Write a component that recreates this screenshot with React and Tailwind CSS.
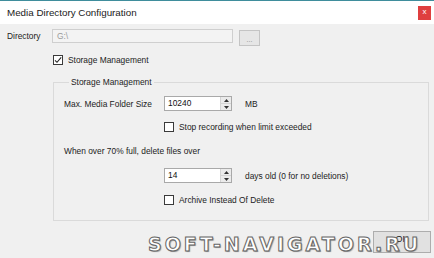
import React from 'react'

const ui = "[font-family:'Liberation_Sans',Arial,sans-serif]"

function Check({ checked }) {
  return (
    <span className="flex h-[10px] w-[10px] shrink-0 items-center justify-center border border-[#3a3a3a] bg-white">
      {checked && (
        <svg width="8" height="8" viewBox="0 0 8 8">
          <path d="M1 4.3 L3 6.3 L7.2 1.4" fill="none" stroke="#222" strokeWidth="1.1" />
        </svg>
      )}
    </span>
  )
}

function Spin({ value }) {
  return (
    <div className="flex h-[15px] w-[68px] border border-[#a9a9a9] bg-white">
      <span className="flex-1 pl-[3px] leading-[13px] text-[#111]">{value}</span>
      <div className="flex w-[11px] flex-col border-l border-[#d4d4d4]">
        <span className="flex flex-1 items-center justify-center border-b border-[#d4d4d4] bg-[#ebebeb]">
          <svg width="5" height="3" viewBox="0 0 5 3">
            <path d="M0 3 L2.5 0 L5 3 Z" fill="#333" />
          </svg>
        </span>
        <span className="flex flex-1 items-center justify-center bg-[#ebebeb]">
          <svg width="5" height="3" viewBox="0 0 5 3">
            <path d="M0 0 L2.5 3 L5 0 Z" fill="#333" />
          </svg>
        </span>
      </div>
    </div>
  )
}

export default function App() {
  return (
    <div className={`relative flex h-[258px] w-[434px] flex-col overflow-hidden border-t border-[#3f8d9c] bg-[#f0f0f0] text-[8.4px] leading-[10px] text-[#1c1c1c] ${ui}`}>
      {/* title bar */}
      <div className="flex h-[23px] items-center justify-between bg-white pl-[7px] pr-[3px]">
        <span className="text-[9.8px] text-[#1a1a1a]">Media Directory Configuration</span>
        <span className="flex h-[14px] w-[13px] items-center justify-center bg-[#df3f3f] pb-[1px] text-[8px] text-white">
          x
        </span>
      </div>

      <div className="flex flex-col pl-[7px]">
        {/* directory row */}
        <div className="mt-[5px] flex h-[16px] items-start">
          <span className="mt-[2px] w-[45px]">Directory</span>
          <div className="flex h-[14px] w-[181px] items-center border border-[#cfcfcf] bg-[#f3f3f3] pl-[4px] text-[#9a9a9a]">
            G:\
          </div>
          <div className="ml-[6px] mt-[1px] flex h-[16px] w-[21px] items-end justify-center border border-[#c4c4c4] bg-[#e6e6e6] pb-[2px] text-[7px] leading-[7px] text-[#8a8a8a]">
            ...
          </div>
        </div>

        {/* storage checkbox */}
        <div className="ml-[46px] mt-[10px] flex h-[10px] items-center gap-[5px]">
          <Check checked />
          <span>Storage Management</span>
        </div>

        {/* group */}
        <fieldset className="ml-[46px] mt-[12px] w-[376px] border border-[#dadada] pb-[15px] pl-[10px] pt-[9px]">
          <legend className="ml-[5px] px-[2px] leading-[10px]">Storage Management</legend>

          <div className="flex h-[15px] items-center">
            <span className="w-[100px]">Max. Media Folder Size</span>
            <Spin value="10240" />
            <span className="ml-[13px]">MB</span>
          </div>

          <div className="ml-[100px] mt-[10px] flex h-[11px] items-center gap-[5px]">
            <Check />
            <span>Stop recording when limit exceeded</span>
          </div>

          <div className="mt-[14px] flex h-[10px] items-center">
            <span>When over 70% full, delete files over</span>
          </div>

          <div className="ml-[100px] mt-[12px] flex h-[15px] items-center">
            <Spin value="14" />
            <span className="ml-[13px]">days old (0 for no deletions)</span>
          </div>

          <div className="ml-[100px] mt-[12px] flex h-[10px] items-center gap-[5px]">
            <Check />
            <span>Archive Instead Of Delete</span>
          </div>
        </fieldset>

        {/* OK button */}
        <div className="mr-[3px] mt-[10px] flex h-[22px] w-[58px] items-start justify-center self-end border border-[#adadad] bg-[#e1e1e1] pt-[2px] text-[9px]">
          OK
        </div>
      </div>

      {/* watermark */}
      <div className="absolute left-[148px] top-[233px] text-[19px] font-bold leading-[21px] tracking-[3px] text-white [-webkit-text-stroke:1px_#666] [font-family:'DejaVu_Sans',Verdana,sans-serif] [text-shadow:1px_1px_1px_rgba(0,0,0,0.35)]">
        SOFT-NAVIGATOR.RU
      </div>
    </div>
  )
}
